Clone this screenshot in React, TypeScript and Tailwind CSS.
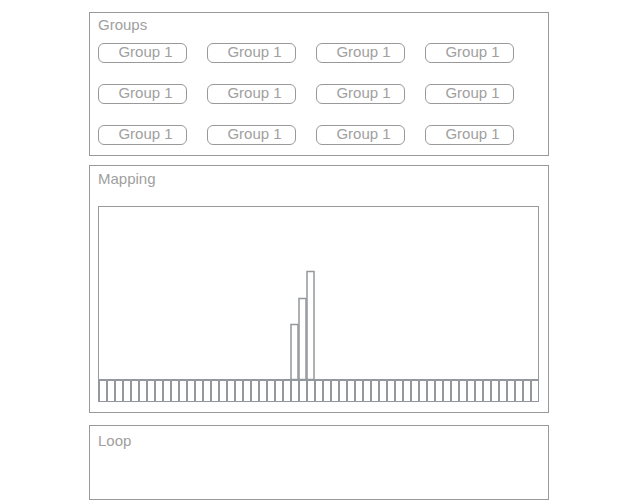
const groups = Array.from({ length: 12 }, () => "Group 1");

const CELL = 8;
const CELLS = 55;
const CHART_W = CELL * CELLS + 1;
const CHART_H = 196;
const BASE = 173;
const peaks: Record<number, number> = { 24: 55, 25: 81, 26: 108 };

function MappingChart() {
  return (
    <svg width={CHART_W} height={CHART_H} className="block">
      <rect x={0.5} y={0.5} width={CHART_W - 1} height={CHART_H - 1} fill="white" stroke="#9a9a9a" />
      {Object.entries(peaks).map(([i, h]) => (
        <rect
          key={i}
          x={Number(i) * CELL + 1}
          y={BASE - h + 0.5}
          width={CELL - 1}
          height={h}
          fill="none"
          stroke="#94989c"
          strokeWidth={1.5}
        />
      ))}
      <rect x={0} y={BASE} width={CHART_W} height={2} fill="#94989c" />
      {Array.from({ length: CELLS + 1 }, (_, i) => (
        <rect key={i} x={i * CELL} y={BASE} width={2} height={CHART_H - BASE} fill="#94989c" />
      ))}
      <rect x={0} y={CHART_H - 1} width={CHART_W} height={1} fill="#94989c" />
    </svg>
  );
}

export default function App() {
  return (
    <div className="min-h-screen bg-white font-['Liberation_Sans',Arial,sans-serif] text-[15px] leading-[17px] text-[#a0a0a0]">
      <div className="w-[460px] mx-auto pt-[12px] flex flex-col">
        <section className="h-[144px] border border-[#999] px-[8px]">
          <div className="h-[30px] pt-[3px]">Groups</div>
          <div className="grid grid-cols-[repeat(4,89px)] gap-x-[20px] gap-y-[21px]">
            {groups.map((g, i) => (
              <button
                key={i}
                className="h-[20px] border border-[#999] rounded-[6px] pl-[6px] pb-[2px] text-center text-[15px] leading-[16px] text-[#a0a0a0]"
              >
                {g}
              </button>
            ))}
          </div>
        </section>

        <section className="mt-[9px] h-[248px] border border-[#999] px-[8px]">
          <div className="h-[40px] pt-[4px]">Mapping</div>
          <MappingChart />
        </section>

        <section className="mt-[12px] h-[75px] border border-[#999] px-[8px]">
          <div className="pt-[6px]">Loop</div>
        </section>
      </div>
    </div>
  );
}
